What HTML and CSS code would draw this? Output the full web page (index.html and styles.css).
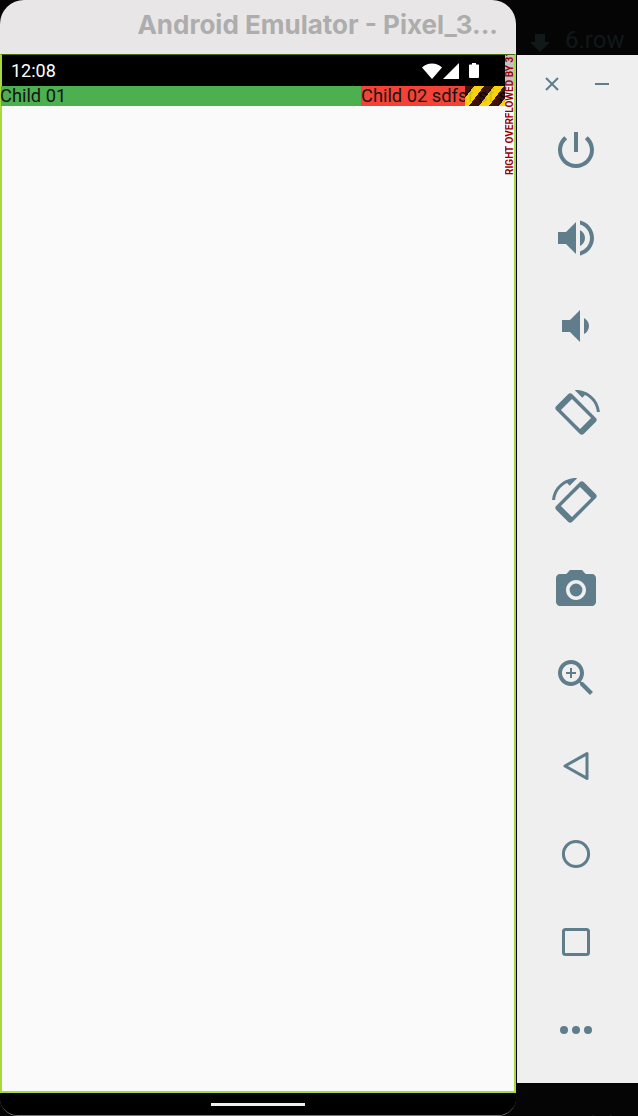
FILE: index.html
```html
<!DOCTYPE html>
<html lang="en">
<head>
    <meta charset="UTF-8">
    <meta name="viewport" content="width=device-width, initial-scale=1.0">
    <title>Android Emulator</title>
    <link rel="stylesheet" href="styles.css">
</head>
<body>
    <div class="window">
        <div class="titlebar">Android Emulator - Pixel_3...</div>
        <div class="screen">
            <div class="statusbar">
                <div class="time">12:08</div>
                <svg class="wifi" viewBox="0 0 20 16"><path d="M0 4.500C5.500-.7 14.500-.7 20 4.500L10 16z"/></svg>
                <svg class="signal" viewBox="0 0 16 16"><path d="M16 0v16H0z"/></svg>
                <svg class="battery" viewBox="0 0 10 15"><path d="M3 0h4v1.500h2.200q.8 0 .8.800V14q0 1-1 1H1q-1 0-1-1V2.300q0-.8.800-.8H3z"/></svg>
            </div>
            <div class="row">
                <div class="child-one">Child 01</div>
                <div class="child-two">Child 02 sdfsf sf sf sf sf</div>
                <div class="stripes"></div>
            </div>
            <div class="overflow-label">RIGHT OVERFLOWED BY 31 PIXELS</div>
        </div>
        <div class="navbar"><div class="handle"></div></div>
    </div>

    <div class="side">
        <div class="desktop-top">
            <svg class="desktop-arrow" viewBox="0 0 20 18"><path d="M5 0h10v8h5L10 18 0 8h5z"/></svg>
            <span>6.row</span>
        </div>
        <div class="toolbar">
            <div class="toolbar-head">
                <svg class="small-icon" viewBox="0 0 16 16"><path class="line" d="M2 2l12 12M14 2L2 14"/></svg>
                <svg class="small-icon" viewBox="0 0 16 16"><path class="line" d="M1 8h14"/></svg>
            </div>
            <div class="tool"><svg viewBox="0 0 24 24"><path d="M13 3h-2v10h2V3zm4.830 2.170l-1.420 1.420C17.990 7.860 19 9.810 19 12c0 3.870-3.130 7-7 7s-7-3.130-7-7c0-2.190 1.010-4.140 2.580-5.420L6.170 5.170C4.230 6.820 3 9.260 3 12c0 4.970 4.030 9 9 9s9-4.030 9-9c0-2.740-1.230-5.180-3.170-6.830z"/></svg></div>
            <div class="tool"><svg viewBox="0 0 24 24"><path d="M3 9v6h4l5 5V4L7 9H3zm13.500 3c0-1.770-1.020-3.290-2.500-4.030v8.050c1.480-.73 2.500-2.250 2.500-4.020zM14 3.230v2.060c2.890.86 5 3.540 5 6.710s-2.110 5.850-5 6.710v2.060c4.010-.91 7-4.490 7-8.770s-2.990-7.860-7-8.770z"/></svg></div>
            <div class="tool"><svg viewBox="0 0 24 24"><path d="M18.500 12c0-1.770-1.020-3.290-2.500-4.030v8.050c1.480-.72 2.500-2.240 2.500-4.020zM5 9v6h4l5 5V4L9 9H5z"/></svg></div>
            <div class="tool"><svg viewBox="0 0 24 24"><path d="M16.480 2.520c3.270 1.550 5.610 4.720 5.970 8.480h1.500C23.440 4.840 18.290 0 12 0l-.66.030 3.810 3.810 1.330-1.320z"/><path fill-rule="evenodd" transform="rotate(45 12 12)" d="M3.750 6.350h16.500q1.500 0 1.500 1.500v8.300q0 1.500-1.500 1.500H3.750q-1.500 0-1.500-1.500v-8.300q0-1.500 1.500-1.500zM5.250 8.100v7.800h13.500V8.100z"/></svg></div>
            <div class="tool"><svg class="mirror" viewBox="0 0 24 24"><path d="M16.480 2.520c3.270 1.550 5.610 4.720 5.970 8.480h1.500C23.440 4.840 18.290 0 12 0l-.66.030 3.810 3.810 1.330-1.320z"/><path fill-rule="evenodd" transform="rotate(45 12 12)" d="M3.750 6.350h16.500q1.500 0 1.500 1.500v8.300q0 1.500-1.500 1.500H3.750q-1.500 0-1.500-1.500v-8.300q0-1.500 1.500-1.500zM5.250 8.100v7.800h13.500V8.100z"/></svg></div>
            <div class="tool"><svg viewBox="0 0 24 24"><circle cx="12" cy="12" r="3.200"/><path d="M9 2L7.170 4H4c-1.100 0-2 .9-2 2v12c0 1.100.9 2 2 2h16c1.100 0 2-.9 2-2V6c0-1.100-.9-2-2-2h-3.170L15 2H9zm3 15c-2.760 0-5-2.240-5-5s2.240-5 5-5 5 2.240 5 5-2.240 5-5 5z"/></svg></div>
            <div class="tool"><svg viewBox="0 0 24 24"><path d="M15.500 14h-.79l-.28-.27C15.410 12.590 16 11.110 16 9.500 16 5.910 13.090 3 9.500 3S3 5.910 3 9.500 5.910 16 9.500 16c1.610 0 3.090-.59 4.230-1.570l.27.28v.79l5 4.990L20.490 19l-4.990-5zm-6 0C7.010 14 5 11.990 5 9.500S7.010 5 9.500 5 14 7.010 14 9.500 11.990 14 9.500 14z"/><path d="M12 10h-2v2H9v-2H7V9h2V7h1v2h2v1z"/></svg></div>
            <div class="tool"><svg viewBox="0 0 24 24"><path class="line" d="M6.500 12l11-6.200v12.400z"/></svg></div>
            <div class="tool"><svg viewBox="0 0 24 24"><circle class="line" cx="12" cy="12" r="6.300"/></svg></div>
            <div class="tool"><svg viewBox="0 0 24 24"><rect class="line" x="5.750" y="5.750" width="12.500" height="12.500" rx="1"/></svg></div>
            <div class="tool"><svg viewBox="0 0 24 24"><circle cx="6" cy="12" r="2"/><circle cx="12" cy="12" r="2"/><circle cx="18" cy="12" r="2"/></svg></div>
        </div>
        <div class="desktop-bottom">ro.mixin</div>
    </div>
</body>
</html>
```

FILE: styles.css
```css
* {
    margin: 0;
    padding: 0;
    box-sizing: border-box;
    font-family: Roboto, Arial, sans-serif;
}

html, body {
    height: 100%;
}

body {
    display: flex;
    background-color: #050505;
    overflow: hidden;
}

/* emulator window */
.window {
    width: 516px;
    height: 1116px;
    flex-shrink: 0;
    display: flex;
    flex-direction: column;
    background-color: #000;
    border-radius: 24px 24px 18px 18px;
    border-bottom: 1px solid #777;
    overflow: hidden;
}

.titlebar {
    height: 54px;
    flex-shrink: 0;
    background-color: #e8e6e7;
    color: #adadad;
    font-family: Inter, Arial, sans-serif;
    font-size: 26px;
    font-weight: 700;
    line-height: 50px;
    text-align: right;
    padding-right: 18px;
    white-space: nowrap;
}

.screen {
    position: relative;
    height: 1039px;
    flex-shrink: 0;
    display: flex;
    flex-direction: column;
    background-color: #fafafa;
    border-top: 1px solid #4d6b00;
    border-left: 2px solid #a8d93a;
    border-right: 2px solid #a8d93a;
    border-bottom: 2px solid #a8d93a;
}

.statusbar {
    height: 31px;
    flex-shrink: 0;
    display: flex;
    align-items: center;
    background-color: #000;
    color: #fff;
    padding-left: 9px;
}

.time {
    font-size: 18px;
    margin-right: auto;
}

.statusbar svg {
    fill: #fff;
    display: block;
}

.wifi {
    width: 20px;
    height: 16px;
    margin-right: 1px;
}

.signal {
    width: 16px;
    height: 16px;
    margin-right: 10px;
}

.battery {
    width: 10px;
    height: 15px;
    margin-right: 35px;
}

/* the flutter row */
.row {
    position: relative;
    height: 20px;
    flex-shrink: 0;
    display: flex;
    font-size: 18.3px;
    line-height: 20px;
    color: #151515;
    margin-right: 9px;
}

.child-one {
    width: 360px;
    background-color: #4caf50;
    margin-left: -1px;
    text-indent: -1px;
}

.child-two {
    flex: 1;
    background-color: #f44336;
    white-space: nowrap;
    overflow: hidden;
}

.stripes {
    position: absolute;
    top: 0;
    right: 0;
    width: 40px;
    height: 20px;
    background: repeating-linear-gradient(126.87deg,
        rgba(0, 0, 0, 0.75) 0, rgba(0, 0, 0, 0.75) 7.2px,
        rgba(255, 255, 0, 0.75) 7.2px, rgba(255, 255, 0, 0.75) 15.2px,
        rgba(0, 0, 0, 0.75) 15.2px, rgba(0, 0, 0, 0.75) 16px);
}

.overflow-label {
    position: absolute;
    top: 0;
    right: 0;
    width: 9px;
    height: 120px;
    writing-mode: vertical-rl;
    transform: rotate(180deg);
    overflow: hidden;
    white-space: nowrap;
    font-size: 10px;
    font-weight: 700;
    line-height: 9px;
    color: #9b0000;
    background: linear-gradient(to bottom, transparent 89px, #c2c2c2 89px);
}

.navbar {
    flex: 1;
    display: flex;
    justify-content: center;
    padding-top: 10px;
    background-color: #000;
}

.handle {
    width: 94px;
    height: 3px;
    background-color: #f0f0f0;
}

/* right hand side */
.side {
    width: 121px;
    margin-left: 1px;
    flex-shrink: 0;
    display: flex;
    flex-direction: column;
}

.desktop-top {
    height: 55px;
    flex-shrink: 0;
    display: flex;
    align-items: flex-end;
    gap: 15px;
    padding-left: 13px;
    color: #10181a;
    font-size: 24px;
    line-height: 30px;
    overflow: hidden;
    white-space: nowrap;
}

.desktop-arrow {
    width: 20px;
    height: 18px;
    margin-bottom: 3px;
    fill: #10181a;
    flex-shrink: 0;
}

.toolbar {
    height: 1028px;
    flex-shrink: 0;
    background-color: #efefef;
}

.toolbar-head {
    height: 51px;
    display: flex;
    align-items: flex-end;
    padding: 0 28px 14px 27px;
    justify-content: space-between;
}

.small-icon {
    width: 16px;
    height: 16px;
}

.tool {
    height: 88px;
    display: flex;
    align-items: center;
    justify-content: center;
    padding-right: 3px;
}

.tool svg {
    width: 48px;
    height: 48px;
    display: block;
}

.toolbar svg {
    fill: #607d8b;
}

.toolbar .line {
    fill: none;
    stroke: #607d8b;
    stroke-width: 1.5;
    stroke-linejoin: round;
}

.toolbar .small-icon .line {
    stroke-width: 2;
}

.mirror {
    transform: scaleX(-1);
}

.desktop-bottom {
    flex: 1;
    padding: 26px 0 0 24px;
    color: #1a1a1a;
    font-size: 24px;
    line-height: 30px;
    overflow: hidden;
    white-space: nowrap;
}
```
